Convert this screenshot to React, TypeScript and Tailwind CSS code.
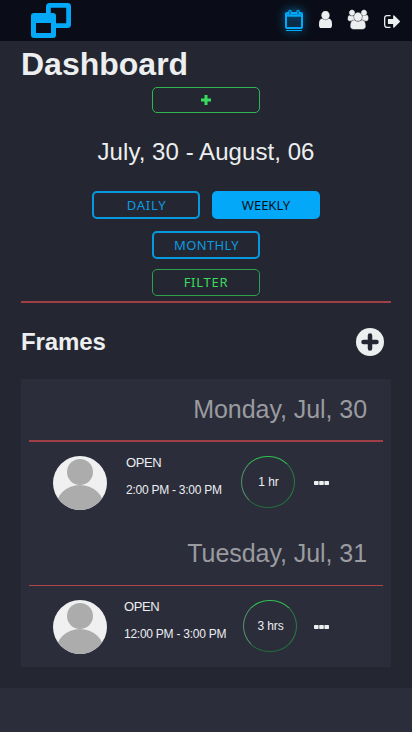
import type { ReactNode } from "react";

const USER = "M1536 1399q0 109-62.5 187t-150.5 78h-854q-88 0-150.5-78t-62.5-187q0-85 8.5-160.5t31.5-152 58.5-131 94-89 134.5-34.5q131 128 313 128t313-128q76 0 134.5 34.5t94 89 58.5 131 31.5 152 8.5 160.5zm-256-887q0 159-112.5 271.5t-271.5 112.5-271.5-112.5-112.5-271.5 112.5-271.5 271.5-112.5 271.5 112.5 112.5 271.5z";
const GROUP = "M593 896q-162 5-265 128h-134q-82 0-138-40.5t-56-118.5q0-353 124-353 6 0 43.5 21t97.5 42.5 119 21.5q67 0 133-23-5 37-5 66 0 159 93 293zm1071 637q0 120-73 189.5t-194 69.5h-874q-121 0-194-69.5t-73-189.5q0-53 3.5-103.5t14-109 26.5-108.5 43-97.5 62-81 85.5-53.5 111.5-20q10 0 43 21.5t73 48 107 48 135 21.5 135-21.5 107-48 73-48 43-21.5q61 0 111.5 20t85.5 53.5 62 81 43 97.5 26.5 108.5 14 109 3.5 103.5zm-1024-1277q0 106-75 181t-181 75-181-75-75-181 75-181 181-75 181 75 75 181zm704 384q0 159-112.5 271.5t-271.5 112.5-271.5-112.5-112.5-271.5 112.5-271.5 271.5-112.5 271.5 112.5 112.5 271.5zm576 225q0 78-56 118.5t-138 40.5h-134q-103-123-265-128 93-134 93-293 0-29-5-66 66 23 133 23 59 0 119-21.5t97.5-42.5 43.5-21q124 0 124 353zm-128-609q0 106-75 181t-181 75-181-75-75-181 75-181 181-75 181 75 75 181z";
const SIGN_OUT = "M704 1440q0 4 1 20t.5 26.5-3 23.5-10 19.5-20.5 6.5h-320q-119 0-203.5-84.5t-84.5-203.5v-704q0-119 84.5-203.5t203.5-84.5h320q13 0 22.5 9.5t9.5 22.5q0 4 1 20t.5 26.5-3 23.5-10 19.5-20.5 6.5h-320q-66 0-113 47t-47 113v704q0 66 47 113t113 47h312l11.5 1 11.5 3 8 5.5 7 9 2 13.5zm928-544q0 26-19 45l-544 544q-19 19-45 19t-45-19-19-45v-288h-448q-26 0-45-19t-19-45v-384q0-26 19-45t45-19h448v-288q0-26 19-45t45-19 45 19l544 544q19 19 19 45z";

function Header() {
  return (
    <header className="flex h-[41px] items-start bg-[#0a0d17] text-[#eceef0]">
      <svg className="ml-[30px] mt-[2px] h-[37px] w-[43px]" viewBox="0 0 43 37" fill="none" stroke="#03a9f8">
        <rect x="18.4" y="3.4" width="20.2" height="20.2" rx="1" strokeWidth="4.8" />
        <rect x="1" y="11" width="25" height="25" rx="3" fill="#03a9f8" stroke="none" />
        <rect x="6" y="21" width="15" height="10" fill="#0a0d17" stroke="none" />
      </svg>
      <nav className="ml-auto flex items-start">
        <svg className="mt-[9px] h-[23px] w-[18px] overflow-visible drop-shadow-[0_0_5px_#038ad0]" viewBox="0 0 18 23" fill="none" stroke="#03a9f8">
          <rect x="1" y="4" width="16" height="15" rx="1" strokeWidth="2" />
          <path d="M1 6.5h16" strokeWidth="2.4" />
          <path d="M5 2.4v3M13 2.4v3" strokeWidth="3.4" strokeLinecap="round" />
          <path d="M5 2v3.5M13 2v3.5" stroke="#06537f" strokeWidth="1.2" />
          <path d="M1 21.5h16" strokeWidth="1" />
        </svg>
        <svg className="ml-4 mt-[11px] h-[17px] w-[13px]" viewBox="256 128 1280 1536" preserveAspectRatio="none" fill="currentColor"><path d={USER} stroke="currentColor" strokeWidth="40" /></svg>
        <svg className="ml-[16px] mt-[10px] h-[19px] w-5 overflow-visible" viewBox="0 0 1920 1792" preserveAspectRatio="none" fill="currentColor"><path d={GROUP} stroke="currentColor" strokeWidth="50" /></svg>
        <svg className="ml-4 mr-[12px] mt-[15px] h-[13px] w-4" viewBox="64 256 1568 1280" preserveAspectRatio="none" fill="currentColor"><path d={SIGN_OUT} /></svg>
      </nav>
    </header>
  );
}

function Button({ className, children }: { className: string; children: ReactNode }) {
  return (
    <button className={`flex w-[108px] items-center justify-center rounded-[5px] font-['Noto_Sans',sans-serif] text-[13px] leading-none ${className}`}>
      {children}
    </button>
  );
}

function Avatar() {
  return (
    <svg className="h-[54px] w-[54px] rounded-full bg-[#f0f0f0]" viewBox="0 0 54 54" fill="#acacac">
      <circle cx="27" cy="16" r="13" />
      <ellipse cx="27" cy="52" rx="24.5" ry="23" />
    </svg>
  );
}

type Shift = { day: string; time: string; length: string; rule: string; info: string; ring: string };

const shifts: Shift[] = [
  { day: "Monday, Jul, 30", time: "2:00 PM - 3:00 PM", length: "1 hr", rule: "border-b-2 border-[#a04046]", info: "ml-[19px] w-[115px]", ring: "mr-[19px]" },
  { day: "Tuesday, Jul, 31", time: "12:00 PM - 3:00 PM", length: "3 hrs", rule: "border-b border-[#b04449]", info: "ml-[17px] w-[119px]", ring: "mr-[17px]" },
];

function Frame({ day, time, length, rule, info, ring }: Shift) {
  return (
    <section className="h-[144px] px-2">
      <h3 className={`h-[63px] pr-4 pt-[15px] text-right text-[25px] leading-[30px] tracking-[-0.06px] text-[#9a9b9f] ${rule}`}>{day}</h3>
      <div className="flex pl-6 pt-[14px]">
        <Avatar />
        <div className={`whitespace-nowrap text-[12px] leading-[14px] text-[#eceef0] ${info}`}>
          <p className="text-[13px] tracking-[-0.4px]">OPEN</p>
          <p className="mt-[13px] tracking-[-0.25px]">{time}</p>
        </div>
        <div className={`flex h-[52px] w-[54px] items-center justify-center rounded-full border border-b-[#246b3b] border-l-[#509469] border-r-[#287c42] border-t-[#2fc151] pl-px text-[12px] tracking-[-0.1px] text-[#eceef0] ${ring}`}>{length}</div>
        <svg className="mt-[25px] h-1 w-[15px]" viewBox="0 0 15 4" fill="#eceef0">
          <rect width="4.6" height="4" rx="0.7" /><rect x="5.2" width="4.6" height="4" rx="0.7" /><rect x="10.4" width="4.6" height="4" rx="0.7" />
        </svg>
      </div>
    </section>
  );
}

export default function App() {
  return (
    <div className="h-[732px] w-[412px] overflow-hidden bg-[#2b2d3b] font-['Liberation_Sans',Arial,sans-serif]">
      <Header />
      <main className="h-[647px] bg-[#242731] px-[21px] text-[#eceef0]">
        <h1 className="h-[46px] pt-[4px] text-[32px] font-bold leading-[38px]">Dashboard</h1>
        <div className="flex flex-col items-center">
          <Button className="h-[26px] border border-[#2fb552]">
            <svg className="h-[10px] w-[10px]" viewBox="0 0 10 10" fill="none" stroke="#38dc5c" strokeWidth="3"><path d="M5 0v10M0 5h10" /></svg>
          </Button>
          <h2 className="mt-[25px] h-[28px] whitespace-nowrap text-[24px] leading-[28px] tracking-[0.06px]">July, 30 - August, 06</h2>
          <div className="mt-[25px] flex gap-3">
            <Button className="h-[28px] border-2 border-[#0799df] pl-px text-[12.5px] tracking-[0.8px] text-[#0a9be2]">DAILY</Button>
            <Button className="h-[28px] bg-[#03a9f8] text-[#071018]">WEEKLY</Button>
          </div>
          <Button className="mt-[12px] h-[28px] border-2 border-[#0799df] pl-px text-[12.5px] tracking-[0.35px] text-[#0a9be2]">MONTHLY</Button>
          <Button className="mt-[10px] h-[27px] border border-[#2fa04e] text-[12.5px] tracking-[0.75px] text-[#38dc5c]">FILTER</Button>
        </div>
        <div className="mt-[5px] h-[2px] bg-[#a04046]" />
        <div className="flex h-[76px] items-start justify-between pr-[7px] pt-[25px]">
          <h2 className="text-[24px] font-bold leading-[28px] tracking-[-0.1px]">Frames</h2>
          <svg className="h-7 w-7" viewBox="0 0 28 28"><circle cx="14" cy="14" r="14" fill="#eceef0" /><path d="M14 7.5v13M7.5 14h13" stroke="#242731" strokeWidth="4.5" strokeLinecap="round" /></svg>
        </div>
        <div className="h-[288px] bg-[#2b2d3b]">
          {shifts.map((s) => <Frame key={s.day} {...s} />)}
        </div>
      </main>
    </div>
  );
}
